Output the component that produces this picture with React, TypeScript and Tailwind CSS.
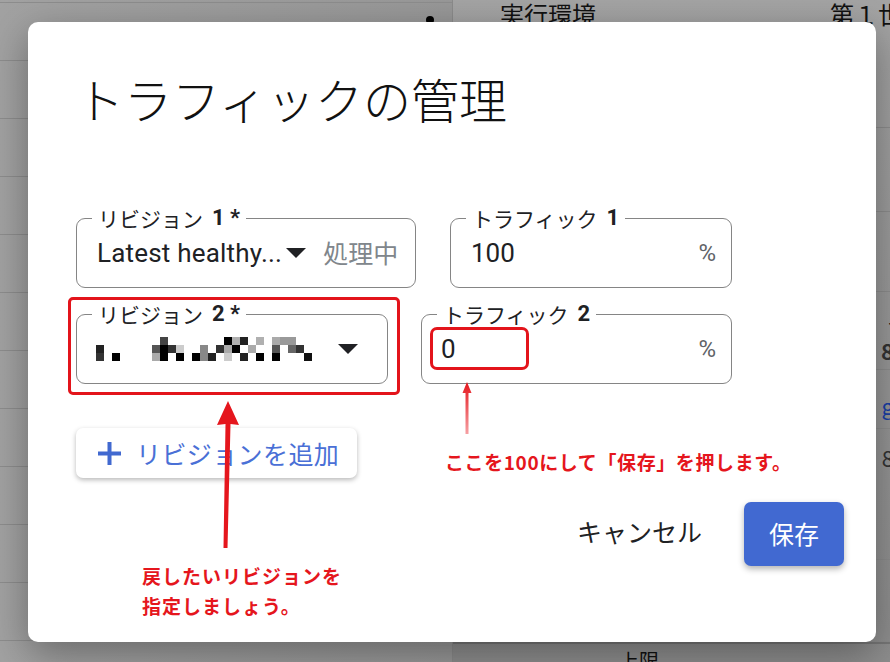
import type { ReactNode } from "react";

const RED = "#e5161d";

// pixelated (mosaic) revision name: [column, row, colour]
const MOSAIC: [number, number, string][] = [
  [8, 0, "#444"], [16, 0, "#000"], [17, 0, "#b0b0b0"], [18, 0, "#222"], [20, 0, "#b0b0b0"],
  [22, 0, "#aaa"], [23, 0, "#999"], [24, 0, "#999"],
  [0, 1, "#222"], [7, 1, "#555"], [8, 1, "#000"], [9, 1, "#333"], [10, 1, "#ccc"], [13, 1, "#888"],
  [15, 1, "#333"], [16, 1, "#aaa"], [17, 1, "#000"], [19, 1, "#aaa"], [22, 1, "#555"], [24, 1, "#666"],
  [25, 1, "#333"],
  [0, 2, "#333"], [2, 2, "#000"], [7, 2, "#aaa"], [8, 2, "#000"], [10, 2, "#000"], [12, 2, "#000"],
  [13, 2, "#888"], [14, 2, "#222"], [16, 2, "#ccc"], [18, 2, "#222"], [20, 2, "#000"], [22, 2, "#000"],
  [26, 2, "#111"],
];

function Caret({ className }: { className?: string }) {
  return (
    <svg width="20" height="10" viewBox="0 0 10 5" className={className}>
      <path d="M0 0L5 5L10 0Z" fill="#202124" />
    </svg>
  );
}

type FieldProps = {
  label: string;
  num: string;
  width: string;
  children: ReactNode;
  overlay?: ReactNode;
};

function Field({ label, num, width, children, overlay }: FieldProps) {
  return (
    <div
      className={`relative flex h-[70px] items-center rounded-[9px] border-[1.5px] border-[#858585] ${width}`}
    >
      <span className="absolute -top-[13px] left-[15px] flex items-center bg-white px-[6px] text-[21px] leading-[24px] text-[#202124]">
        <span className="font-['Noto_Sans_CJK_JP',sans-serif]">{label}</span>
        <b className="ml-[9px] text-[22px] font-bold">{num}</b>
      </span>
      {children}
      {overlay}
    </div>
  );
}

function Background() {
  const rows = Array.from({ length: 11 });
  return (
    <div className="flex h-full w-full text-[#111]">
      <div className="flex w-[453px] shrink-0 flex-col border-r-[1.5px] border-[#8b8b8b] bg-[linear-gradient(90deg,#a2a2a2,#989898)]">
        <div className="h-[3px] border-b-[1.5px] border-[#8d8d8d]" />
        {rows.map((_, i) => (
          <div key={i} className="relative h-[58px] shrink-0 border-b-[1.5px] border-[#8d8d8d]">
            <span className="absolute right-[18px] top-[13px] h-[8px] w-[8px] rounded-full bg-black" />
          </div>
        ))}
      </div>
      <div className="flex min-w-0 flex-1 flex-col bg-[linear-gradient(180deg,#a4a4a4,#8e8e8e)] font-['Noto_Sans_CJK_JP',sans-serif]">
        <div className="flex h-[40px] items-start whitespace-nowrap pl-[47px] text-[24px] leading-[28px]">
          <span>実行環境</span>
          <span className="ml-[234px]">第１世</span>
        </div>
        <div className="h-[88px] border-b-[1.5px] border-[#8d8d8d]" />
        <div className="h-[84px] border-b-[1.5px] border-[#8d8d8d]" />
        <div className="h-[80px] border-b-[1.5px] border-[#8d8d8d]" />
        <div className="flex h-[78px] flex-col items-end justify-end border-b-[1.5px] border-[#8d8d8d] pb-[4px] text-[22px] leading-[30px]">
          <span className="mr-[-6px]">-</span>
          <span className="mr-[-4px] font-bold text-[#333]">8</span>
        </div>
        <div className="flex h-[58px] items-end justify-end pb-[6px] text-[22px]">
          <span className="mr-[-4px] text-[#1a3fa6] underline">g</span>
        </div>
        <div className="flex h-[52px] items-end justify-end border-t-[1.5px] border-[#8d8d8d] pb-[6px] text-[22px]">
          <span className="mr-[-4px] text-[#333]">8</span>
        </div>
        <div className="h-[80px] border-b-[1.5px] border-[#8d8d8d]" />
        <div className="h-[82px] border-b-[1.5px] border-[#8d8d8d]" />
        <div className="flex h-[20px] items-end border-t-[2px] border-[#777] pl-[166px] text-[20px] leading-[14px]">
          <span className="translate-y-[6px]">上限</span>
        </div>
      </div>
    </div>
  );
}

function Arrows() {
  return (
    <svg className="pointer-events-none absolute inset-0" width="890" height="662" viewBox="0 0 890 662">
      <defs>
        <linearGradient id="fade" x1="0" y1="0" x2="0" y2="1">
          <stop offset="0" stopColor={RED} />
          <stop offset="1" stopColor="#f6a0a3" />
        </linearGradient>
      </defs>
      <path d="M228 401L239 425L230.5 424L227.5 548L223.5 548L225.5 424L217 425Z" fill={RED} />
      <path d="M467 382L471.5 393L468.5 393L468.5 434L465.5 434L465.5 393L462.5 393Z" fill="url(#fade)" />
    </svg>
  );
}

export default function App() {
  return (
    <div className="relative h-[662px] w-[890px] overflow-hidden bg-[#9a9a9a] font-['Roboto','Noto_Sans_CJK_JP',sans-serif]">
      <Background />

      <div className="absolute left-[28px] top-[22px] h-[620px] w-[848px] rounded-[10px] bg-white pl-[48px] pt-[52px] shadow-[0_12px_40px_rgba(0,0,0,0.35)]">
        <h1 className="text-[48px] font-light leading-none text-[#111] font-['Noto_Sans_CJK_JP',sans-serif]">
          トラフィックの管理
        </h1>

        <div className="mt-[96px] flex gap-[34px]">
          <Field label="リビジョン" num="1 *" width="w-[340px]">
            <span className="pl-[20px] text-[26px] tracking-[0.2px] text-[#202124]">Latest healthy...</span>
            <Caret className="ml-[4px]" />
            <span className="ml-[17px] text-[25px] text-[#80868b] font-['Noto_Sans_CJK_JP',sans-serif]">処理中</span>
          </Field>
          <Field label="トラフィック" num="1" width="w-[282px]">
            <span className="pl-[20px] text-[26px] text-[#202124]">100</span>
            <span className="ml-auto pr-[15px] text-[24px] text-[#5f6368]">%</span>
          </Field>
        </div>

        <div className="mt-[26px] flex gap-[33px]">
          <Field
            label="リビジョン"
            num="2 *"
            width="w-[312px]"
            overlay={
              <span className="pointer-events-none absolute -bottom-[12px] -left-[9px] -right-[13px] -top-[18px] rounded-[5px] border-[3px] border-[#e3141b]" />
            }
          >
            <svg width="216" height="24" className="ml-[19px]">
              {MOSAIC.map(([c, r, f]) => (
                <rect key={`${c}-${r}`} x={c * 8} y={r * 8} width="8" height="8" fill={f} />
              ))}
            </svg>
            <Caret className="ml-auto mr-[29px]" />
          </Field>
          <Field
            label="トラフィック"
            num="2"
            width="w-[311px]"
            overlay={
              <span className="pointer-events-none absolute left-[8px] top-[12px] h-[43px] w-[99px] rounded-[7px] border-[3px] border-[#e3141b]" />
            }
          >
            <span className="pl-[19px] text-[26px] text-[#202124]">0</span>
            <span className="ml-auto pr-[15px] text-[24px] text-[#5f6368]">%</span>
          </Field>
        </div>

        <button
          type="button"
          className="mt-[44px] flex h-[50px] w-[281px] items-center gap-[14px] rounded-[7px] bg-white pl-[21px] shadow-[0_2px_5px_rgba(0,0,0,0.28)]"
        >
          <svg width="25" height="25" viewBox="0 0 25 25">
            <path d="M12.5 1V24M1 12.5H24" stroke="#4169d0" strokeWidth="4" />
          </svg>
          <span className="text-[25px] leading-none tracking-[0.4px] text-[#4a70d6] font-['Noto_Sans_CJK_JP',sans-serif]">
            リビジョンを追加
          </span>
        </button>

        <div className="mt-[24px] flex items-center justify-end gap-[26px] pr-[32px] font-['Noto_Sans_CJK_JP',sans-serif]">
          <button type="button" className="-translate-y-[2px] px-[16px] text-[25px] text-[#202124]">
            キャンセル
          </button>
          <button
            type="button"
            className="flex h-[64px] w-[100px] items-center justify-center rounded-[7px] bg-[#4169d1] text-[25px] text-white shadow-[0_3px_6px_rgba(0,0,0,0.3)]"
          >
            保存
          </button>
        </div>
      </div>

      <p className="absolute left-[445px] top-[449px] text-[19px] font-bold leading-[26px] tracking-[0.6px] text-[#e5161d] font-['Noto_Sans_CJK_JP',sans-serif]">
        ここを100にして「保存」を押します。
      </p>
      <p className="absolute left-[142px] top-[561px] text-[19px] font-bold leading-[30px] tracking-[1px] text-[#e5161d] font-['Noto_Sans_CJK_JP',sans-serif]">
        戻したいリビジョンを
        <br />
        指定しましょう。
      </p>

      <Arrows />
    </div>
  );
}
